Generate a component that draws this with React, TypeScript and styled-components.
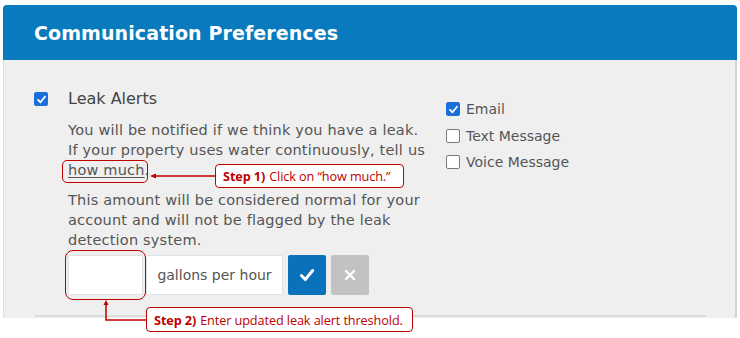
import React, { FC } from 'react';
import styled, { createGlobalStyle } from 'styled-components';

const GlobalStyle = createGlobalStyle`
  html, body {
    margin: 0;
    padding: 0;
    background: #ffffff;
  }
  * {
    box-sizing: border-box;
  }
`;

const RED = '#c00000';

const Page = styled.div`
  position: relative;
  width: 740px;
  height: 338px;
  padding: 5px 0 0 3px;
  font-family: 'DejaVu Sans', 'Open Sans', sans-serif;
  overflow: hidden;
`;

const Panel = styled.div`
  width: 734px;
  display: flex;
  flex-direction: column;
`;

const Header = styled.div`
  height: 55px;
  background: #0a7abf;
  border-radius: 4px 4px 0 0;
  display: flex;
  align-items: center;
  padding-left: 31px;
`;

const Title = styled.h2`
  margin: 0;
  color: #ffffff;
  font-size: 19px;
  font-weight: 600;
  letter-spacing: 0.1px;
`;

const Body = styled.div`
  height: 258px;
  background: #efefef;
  border-left: 1px solid #dedede;
  border-right: 2px solid #d4d4d4;
  display: flex;
  flex-direction: column;
`;

const Columns = styled.div`
  flex: 1;
  display: flex;
  padding: 29px 0 0 30px;
`;

const LeftCol = styled.div`
  width: 412px;
`;

const RightCol = styled.div`
  padding-top: 13px;
  display: flex;
  flex-direction: column;
  gap: 12.5px;
`;

const Divider = styled.div`
  height: 2px;
  background: #dcdcdc;
  margin: 0 29px 1px 31px;
`;

const CheckRow = styled.div<{ $gap: number }>`
  display: flex;
  align-items: center;
  gap: ${(p) => p.$gap}px;
`;

const Box = styled.span<{ $checked?: boolean }>`
  width: 14px;
  height: 14px;
  border-radius: 2px;
  flex-shrink: 0;
  display: inline-flex;
  align-items: center;
  justify-content: center;
  background: ${(p) => (p.$checked ? '#1a6fd8' : '#ffffff')};
  border: 1px solid ${(p) => (p.$checked ? '#1a6fd8' : '#7a7a7a')};
`;

const Label = styled.span`
  font-size: 16px;
  font-weight: 500;
  color: #444444;
  line-height: 20px;
`;

const OptionLabel = styled.span`
  font-size: 14px;
  color: #555555;
  line-height: 14px;
`;

const Description = styled.div`
  padding-left: 34px;
  margin-top: 11px;
`;

const Para = styled.p`
  margin: 0 0 10px;
  font-size: 14.5px;
  letter-spacing: 0.2px;
  line-height: 20px;
  color: #555555;
  white-space: nowrap;
`;

const Link = styled.a`
  color: #555555;
  text-decoration: underline;
  text-underline-offset: 2px;
`;

const InputRow = styled.div`
  display: flex;
  align-items: stretch;
  height: 40px;
  margin-top: -5px;
`;

const Amount = styled.div`
  width: 75px;
  background: #ffffff;
  border: 1px solid #e2e2e2;
`;

const Addon = styled.div`
  width: 137px;
  margin-left: 3px;
  background: #ffffff;
  border: 1px solid #e2e2e2;
  display: flex;
  align-items: center;
  justify-content: center;
  font-size: 14px;
  color: #555555;
`;

const ActionButton = styled.button<{ $primary?: boolean }>`
  width: 38px;
  margin-left: 5px;
  border: none;
  border-radius: 2px;
  background: ${(p) => (p.$primary ? '#0a72bb' : '#c2c2c2')};
  display: flex;
  align-items: center;
  justify-content: center;
  padding: 0;
`;

const Callout = styled.div<{ $x: number; $y: number; $w: number; $h: number }>`
  position: absolute;
  left: ${(p) => p.$x}px;
  top: ${(p) => p.$y}px;
  width: ${(p) => p.$w}px;
  height: ${(p) => p.$h}px;
  border: 1.5px solid ${RED};
  border-radius: 4px;
  background: #ffffff;
  display: flex;
  align-items: center;
  padding-left: 7px;
  font-family: 'Open Sans', 'Liberation Sans', sans-serif;
  font-size: 12.7px;
  letter-spacing: -0.1px;
  color: ${RED};
  white-space: nowrap;
`;

const Strong = styled.b`
  font-weight: 700;
  margin-right: 4px;
`;

const Ring = styled.div<{ $x: number; $y: number; $w: number; $h: number; $r: number }>`
  position: absolute;
  left: ${(p) => p.$x}px;
  top: ${(p) => p.$y}px;
  width: ${(p) => p.$w}px;
  height: ${(p) => p.$h}px;
  border: 1.5px solid ${RED};
  border-radius: ${(p) => p.$r}px;
`;

const Arrows = styled.svg`
  position: absolute;
  left: 0;
  top: 0;
  pointer-events: none;
`;

const Tick: FC<{ size: number }> = ({ size }) => (
  <svg width={size} height={size} viewBox="0 0 16 16">
    <path d="M3 8.5 L6.5 12 L13 4" fill="none" stroke="#fff" strokeWidth="2.6" strokeLinecap="round" strokeLinejoin="round" />
  </svg>
);

const Check: FC<{ checked?: boolean }> = ({ checked }) => (
  <Box $checked={checked}>{checked && <Tick size={11} />}</Box>
);

const App: FC = () => {
  return (
    <>
      <GlobalStyle />
      <Page>
        <Panel>
          <Header>
            <Title>Communication Preferences</Title>
          </Header>
          <Body>
            <Columns>
              <LeftCol>
                <CheckRow $gap={20}>
                  <Check checked />
                  <Label>Leak Alerts</Label>
                </CheckRow>
                <Description>
                  <Para>
                    You will be notified if we think you have a leak.
                    <br />
                    If your property uses water continuously, tell us
                    <br />
                    <Link>how much</Link>.
                  </Para>
                  <Para>
                    This amount will be considered normal for your
                    <br />
                    account and will not be flagged by the leak
                    <br />
                    detection system.
                  </Para>
                  <InputRow>
                    <Amount />
                    <Addon>gallons per hour</Addon>
                    <ActionButton $primary>
                      <Tick size={18} />
                    </ActionButton>
                    <ActionButton>
                      <svg width="12" height="12" viewBox="0 0 12 12">
                        <path d="M2 2 L10 10 M10 2 L2 10" stroke="#fff" strokeWidth="2.4" strokeLinecap="round" />
                      </svg>
                    </ActionButton>
                  </InputRow>
                </Description>
              </LeftCol>
              <RightCol>
                <CheckRow $gap={6}>
                  <Check checked />
                  <OptionLabel>Email</OptionLabel>
                </CheckRow>
                <CheckRow $gap={6}>
                  <Check />
                  <OptionLabel>Text Message</OptionLabel>
                </CheckRow>
                <CheckRow $gap={6}>
                  <Check />
                  <OptionLabel>Voice Message</OptionLabel>
                </CheckRow>
              </RightCol>
            </Columns>
            <Divider />
          </Body>
        </Panel>

        <Ring $x={62} $y={160} $w={86} $h={23} $r={5} />
        <Ring $x={65} $y={250} $w={81} $h={50} $r={8} />
        <Arrows width={740} height={338}>
          <line x1={215} y1={176} x2={154} y2={176} stroke={RED} strokeWidth={1.5} />
          <path d="M150 176 L156 173.5 L156 178.5 Z" fill={RED} />
          <polyline points="146,320 106,320 106,304" fill="none" stroke={RED} strokeWidth={1.5} />
          <path d="M106 300 L103.5 305 L108.5 305 Z" fill={RED} />
        </Arrows>
        <Callout $x={215} $y={164} $w={189} $h={24}>
          <Strong>Step 1)</Strong>Click on “how much.”
        </Callout>
        <Callout $x={146} $y={307} $w={267} $h={25}>
          <Strong>Step 2)</Strong>Enter updated leak alert threshold.
        </Callout>
      </Page>
    </>
  );
};

export default App;
